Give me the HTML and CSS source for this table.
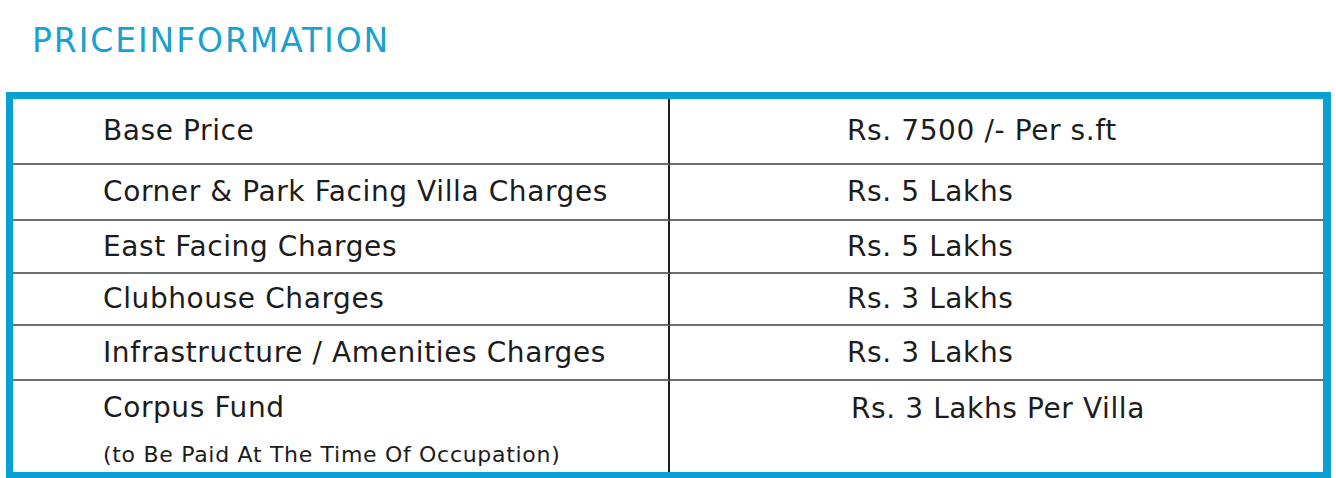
FILE: index.html
```html
<!DOCTYPE html>
<html>
<head>
<meta charset="utf-8">
<link rel="stylesheet" href="styles.css">
</head>
<body>
<h1 class="title">PRICEINFORMATION</h1>
<div class="price-table">
  <div class="cell label">Base Price</div>
  <div class="cell value">Rs. 7500 /- Per s.ft</div>
  <div class="cell label">Corner &amp; Park Facing Villa Charges</div>
  <div class="cell value">Rs. 5 Lakhs</div>
  <div class="cell label">East Facing Charges</div>
  <div class="cell value">Rs. 5 Lakhs</div>
  <div class="cell label">Clubhouse Charges</div>
  <div class="cell value">Rs. 3 Lakhs</div>
  <div class="cell label">Infrastructure / Amenities Charges</div>
  <div class="cell value">Rs. 3 Lakhs</div>
  <div class="cell label last">
    <div>Corpus Fund</div>
    <div class="note">(to Be Paid At The Time Of Occupation)</div>
  </div>
  <div class="cell value last">Rs. 3 Lakhs Per Villa</div>
</div>
</body>
</html>
```
FILE: styles.css
```css
html, body {
  margin: 0;
  padding: 0;
  background: #ffffff;
}
body {
  font-family: "DejaVu Sans", Verdana, sans-serif;
  color: #1c1c1c;
  width: 1336px;
  height: 478px;
  overflow: hidden;
}
.title {
  margin: 22px 0 0 32px;
  height: 38px;
  font-size: 33px;
  line-height: 38px;
  font-weight: normal;
  color: #1aa0d2;
  letter-spacing: 1.9px;
}
.price-table {
  margin: 32px 5px 0 6px;
  border: 7px solid #0aa0d4;
  border-right-width: 8px;
  border-bottom-width: 6px;
  display: grid;
  grid-template-columns: 657px 1fr;
  grid-template-rows: 66px 56px 53px 52px 55px 91px;
}
.cell {
  font-size: 28px;
  line-height: 32px;
  letter-spacing: 0.6px;
  display: flex;
  align-items: center;
  border-bottom: 2px solid #6e6e6e;
}
.label {
  padding-left: 90px;
  border-right: 2px solid #1e1e1e;
}
.value {
  padding-left: 177px;
}
.last {
  border-bottom: none;
  flex-direction: column;
  align-items: flex-start;
  justify-content: flex-start;
  padding-top: 11px;
}
.value.last {
  padding-left: 181px;
  padding-top: 12px;
}
.note {
  font-size: 22px;
  line-height: 26px;
  letter-spacing: 0.7px;
  margin-top: 18px;
}
```
